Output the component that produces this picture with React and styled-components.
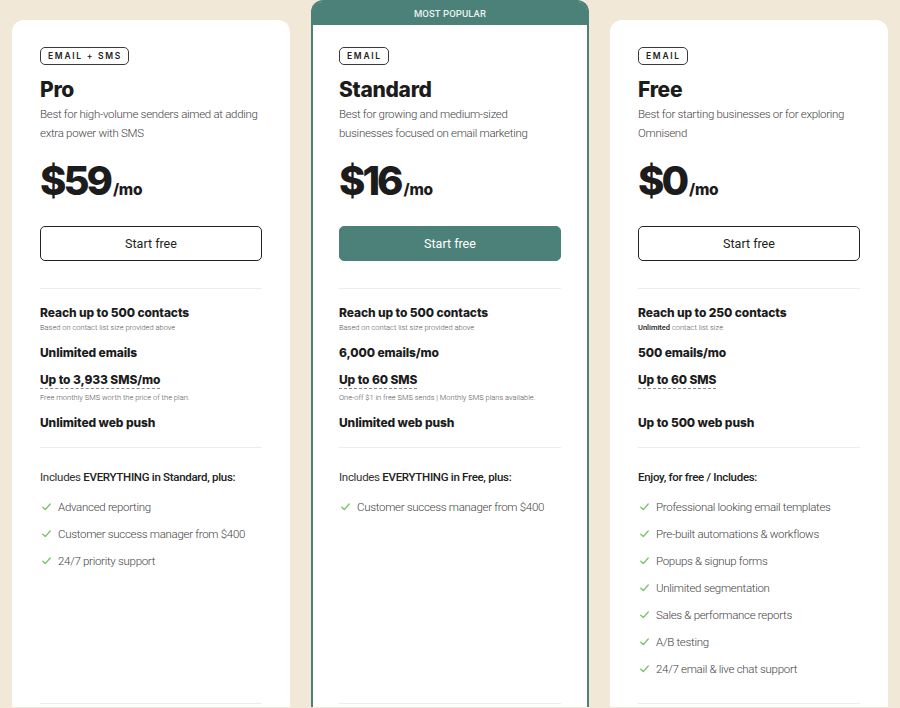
import React from "react";
import styled, { createGlobalStyle, css } from "styled-components";

const GREEN = "#4c8179";

const Global = createGlobalStyle`
  html, body { margin: 0; padding: 0; overflow: hidden; background: #f1e8d7; }
  body { font-family: Roboto, "Liberation Sans", sans-serif; color: #222; }
  * { box-sizing: border-box; }
`;

const Page = styled.div`
  display: grid;
  grid-template-columns: repeat(3, 278px);
  column-gap: 21px;
  padding: 0 11px 0 12px;
  align-items: stretch;
`;

const Card = styled.div`
  background: #fff;
  border-radius: 12px 12px 0 0;
  display: flex;
  flex-direction: column;
  margin-top: 20px;
  padding: 27px 28px 3px;
  ${(p) =>
    p.$featured &&
    css`
      margin-top: 0;
      border: 2px solid ${GREEN};
      border-bottom: 0;
      padding: 0 26px 3px;
    `}
`;

const Banner = styled.div`
  background: ${GREEN};
  color: #e6f2ef;
  height: 23px;
  margin: 0 -26px 22px;
  display: flex;
  align-items: center;
  justify-content: center;
  font-family: Roboto, sans-serif;
  font-size: 9.5px;
  font-weight: 500;
  letter-spacing: 0.1px;
  border-radius: 9px 9px 0 0;
`;

const Badge = styled.div`
  align-self: flex-start;
  height: 18px;
  padding: 0 6px 0 7px;
  border: 1px solid #3a3a3a;
  border-radius: 5px;
  font-family: Inter, sans-serif;
  font-size: 8.5px;
  font-weight: 600;
  letter-spacing: 1.7px;
  display: flex;
  align-items: center;
  color: #222;
`;

const Title = styled.h2`
  margin: 12px 0 0;
  font-family: Inter, sans-serif;
  font-size: 21px;
  line-height: 26px;
  font-weight: 800;
  letter-spacing: -0.3px;
  color: #1c1c1c;
`;

const Desc = styled.p`
  margin: 2px 0 0;
  font-family: Roboto, sans-serif;
  font-size: 11.5px;
  font-weight: 300;
  letter-spacing: -0.3px;
  line-height: 19px;
  color: #444;
  min-height: 38px;
`;

const Price = styled.div`
  margin-top: 15px;
  display: flex;
  align-items: baseline;
  font-family: Inter, sans-serif;
  color: #1c1c1c;
`;

const Amount = styled.span`
  font-size: 40px;
  line-height: 46px;
  font-weight: 800;
  letter-spacing: -3px;
`;

const Per = styled.span`
  font-size: 15.5px;
  font-weight: 800;
  margin-left: 3px;
  letter-spacing: -0.3px;
`;

const Button = styled.button`
  margin-top: 22px;
  height: 35px;
  width: 100%;
  border-radius: 5px;
  font-family: Roboto, sans-serif;
  font-size: 12.5px;
  font-weight: 400;
  cursor: pointer;
  border: 1.5px solid #222;
  background: #fff;
  color: #222;
  ${(p) =>
    p.$primary &&
    css`
      border-color: ${GREEN};
      background: ${GREEN};
      color: #fff;
    `}
`;

const Divider = styled.hr`
  margin: 27px 0 0;
  border: 0;
  border-top: 1px solid #ececec;
  width: 100%;
`;

const Features = styled.div`
  display: flex;
  flex-direction: column;
  padding-top: 16px;
  gap: 11px;
`;

const Feature = styled.div`
  display: flex;
  flex-direction: column;
  align-items: flex-start;
`;

const FeatureTitle = styled.div`
  font-family: Inter, sans-serif;
  font-size: 12px;
  line-height: 16px;
  font-weight: 800;
  letter-spacing: -0.1px;
  color: #1c1c1c;
  ${(p) =>
    p.$dashed &&
    css`
      border-bottom: 1px dashed #8a8a8a;
      line-height: 15px;
      padding-bottom: 1px;
    `}
`;

const Note = styled.div`
  margin-top: ${(p) => (p.$afterDash ? "3px" : "1px")};
  font-family: Roboto, sans-serif;
  font-size: 7.5px;
  line-height: 12px;
  font-weight: 300;
  color: #555;
  b { font-weight: 500; color: #222; }
`;

const Includes = styled.div`
  margin-top: 21px;
  font-family: Roboto, sans-serif;
  font-size: 11.5px;
  letter-spacing: -0.3px;
  line-height: 16px;
  color: #333;
  b { font-weight: 500; color: #222; }
`;

const List = styled.ul`
  list-style: none;
  margin: 8px 0 0;
  padding: 0;
  flex: 1;
`;

const Item = styled.li`
  display: flex;
  align-items: center;
  height: 27px;
  font-family: Roboto, sans-serif;
  font-size: 11.5px;
  letter-spacing: -0.3px;
  font-weight: 300;
  color: #444;
  white-space: nowrap;
  svg { margin: 0 7px 0 2px; flex: none; }
`;

const BottomDivider = styled(Divider)`
  margin-top: 21px;
`;

const Check = () => (
  <svg width="9" height="8" viewBox="0 0 9 8">
    <path d="M0.8 4.2 L3.3 6.6 L8.2 1" fill="none" stroke="#7cc36b" strokeWidth="1.4" strokeLinecap="round" strokeLinejoin="round" />
  </svg>
);

const plans = [
  {
    badge: "EMAIL + SMS",
    name: "Pro",
    desc: "Best for high-volume senders aimed at adding extra power with SMS",
    price: "$59",
    features: [
      { t: "Reach up to 500 contacts", n: "Based on contact list size provided above" },
      { t: "Unlimited emails" },
      { t: "Up to 3,933 SMS/mo", dashed: true, n: "Free monthly SMS worth the price of the plan." },
      { t: "Unlimited web push" },
    ],
    includes: (
      <>
        Includes <b>EVERYTHING in Standard, plus:</b>
      </>
    ),
    list: ["Advanced reporting", "Customer success manager from $400", "24/7 priority support"],
  },
  {
    featured: true,
    badge: "EMAIL",
    name: "Standard",
    desc: "Best for growing and medium-sized businesses focused on email marketing",
    price: "$16",
    features: [
      { t: "Reach up to 500 contacts", n: "Based on contact list size provided above" },
      { t: "6,000 emails/mo" },
      { t: "Up to 60 SMS", dashed: true, n: "One-off $1 in free SMS sends | Monthly SMS plans available." },
      { t: "Unlimited web push" },
    ],
    includes: (
      <>
        Includes <b>EVERYTHING in Free, plus:</b>
      </>
    ),
    list: ["Customer success manager from $400"],
  },
  {
    badge: "EMAIL",
    name: "Free",
    desc: "Best for starting businesses or for exploring Omnisend",
    price: "$0",
    features: [
      {
        t: "Reach up to 250 contacts",
        n: (
          <>
            <b>Unlimited</b> contact list size
          </>
        ),
      },
      { t: "500 emails/mo" },
      { t: "Up to 60 SMS", dashed: true, n: "\u00a0" },
      { t: "Up to 500 web push" },
    ],
    includes: <b>Enjoy, for free / Includes:</b>,
    list: [
      "Professional looking email templates",
      "Pre-built automations & workflows",
      "Popups & signup forms",
      "Unlimited segmentation",
      "Sales & performance reports",
      "A/B testing",
      "24/7 email & live chat support",
    ],
  },
];

export default function App() {
  return (
    <>
      <Global />
      <Page>
        {plans.map((p) => (
          <Card key={p.name} $featured={p.featured}>
            {p.featured && <Banner>MOST POPULAR</Banner>}
            <Badge>{p.badge}</Badge>
            <Title>{p.name}</Title>
            <Desc>{p.desc}</Desc>
            <Price>
              <Amount>{p.price}</Amount>
              <Per>/mo</Per>
            </Price>
            <Button $primary={p.featured}>Start free</Button>
            <Divider />
            <Features>
              {p.features.map((f) => (
                <Feature key={f.t}>
                  <FeatureTitle $dashed={f.dashed}>{f.t}</FeatureTitle>
                  {f.n && <Note $afterDash={f.dashed}>{f.n}</Note>}
                </Feature>
              ))}
            </Features>
            <Divider style={{ marginTop: 16 }} />
            <Includes>{p.includes}</Includes>
            <List>
              {p.list.map((i) => (
                <Item key={i}>
                  <Check />
                  {i}
                </Item>
              ))}
            </List>
            <BottomDivider />
          </Card>
        ))}
      </Page>
    </>
  );
}
